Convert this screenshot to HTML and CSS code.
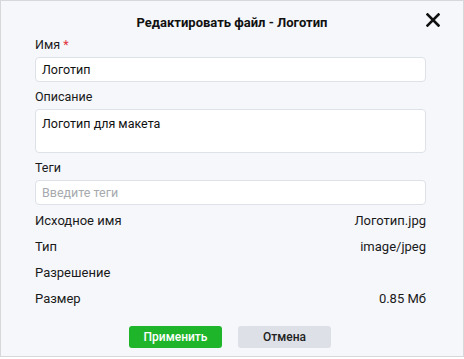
FILE: index.html
```html
<!DOCTYPE html>
<html lang="ru">
<head>
<meta charset="utf-8">
<link rel="stylesheet" href="styles.css">
</head>
<body>
<div class="dialog">
  <div class="header">
    <h1 class="title">Редактировать файл - Логотип</h1>
    <button class="close" aria-label="Закрыть">
      <svg width="14" height="14" viewBox="0 0 14 14"><path d="M1.5 1.5L12.5 12.5M12.5 1.5L1.5 12.5" stroke="#111" stroke-width="2.6" stroke-linecap="square"/></svg>
    </button>
  </div>
  <div class="body">
    <div class="field">
      <label class="label">Имя <span class="req">*</span></label>
      <div class="input">Логотип</div>
    </div>
    <div class="field">
      <label class="label">Описание</label>
      <div class="input textarea">Логотип для макета</div>
    </div>
    <div class="field">
      <label class="label">Теги</label>
      <div class="input placeholder">Введите теги</div>
    </div>
    <div class="info">
      <div class="row"><span>Исходное имя</span><span>Логотип.jpg</span></div>
      <div class="row"><span>Тип</span><span>image/jpeg</span></div>
      <div class="row"><span>Разрешение</span><span></span></div>
      <div class="row"><span>Размер</span><span>0.85 Мб</span></div>
    </div>
  </div>
  <div class="actions">
    <button class="btn primary">Применить</button>
    <button class="btn secondary">Отмена</button>
  </div>
</div>
</body>
</html>
```
FILE: styles.css
```css
* { box-sizing: border-box; }
html, body { margin: 0; padding: 0; background: #ffffff; }
body { font-family: Roboto, "Noto Sans", sans-serif; color: #1a1a1a; }
.dialog {
  width: 464px;
  height: 357px;
  background: #f5f7fb;
  border: 1px solid #d7d8da;
  display: flex;
  flex-direction: column;
}
.header {
  position: relative;
  flex-shrink: 0;
  height: 36px;
  padding-top: 14px;
  display: flex;
  justify-content: center;
}
.title { margin: 0; font-size: 13px; line-height: 16px; font-weight: 700; color: #111; }
.close {
  position: absolute; right: 23px; top: 12px;
  border: 0; background: none; padding: 0; width: 14px; height: 14px;
  display: flex;
}
.body { padding: 0 37px 0 34px; display: flex; flex-direction: column; flex-shrink: 0; }
.field { display: flex; flex-direction: column; margin-bottom: 7px; }
.label { font-size: 12.5px; line-height: 16px; margin-bottom: 4px; color: #1a1a1a; }
.req { color: #e0323a; }
.input {
  height: 25px; background: #fff; border: 1px solid #dde1e8; border-radius: 4px;
  font-size: 12.5px; padding: 0 6px; display: flex; align-items: center; color: #111;
}
.textarea { height: 44px; align-items: flex-start; padding-top: 6px; }
.placeholder { color: #a6a9ae; }
.info { display: flex; flex-direction: column; margin-top: -5px; }
.row { display: flex; justify-content: space-between; font-size: 13px; height: 26px; align-items: center; color: #1a1a1a; }
.actions { margin-top: 15px; padding-right: 4px; display: flex; justify-content: center; gap: 16px; }
.btn {
  width: 93px; height: 22px; border: 0; border-radius: 3px; font-family: inherit;
  font-size: 12px; font-weight: 500; padding: 0;
}
.primary { background: #1fb52b; color: #fff; }
.secondary { background: #dde1e7; color: #222; }
```
